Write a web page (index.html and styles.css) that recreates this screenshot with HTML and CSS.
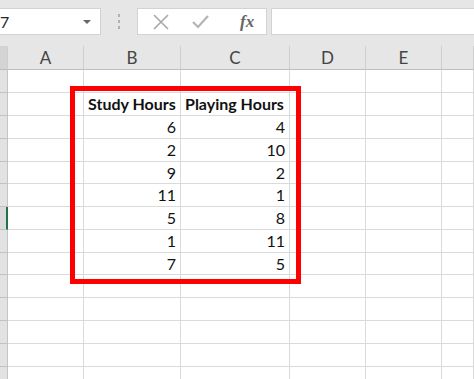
FILE: index.html
```html
<!DOCTYPE html>
<html lang="en">
<head>
  <meta charset="UTF-8">
  <meta name="viewport" content="width=device-width, initial-scale=1.0">
  <title>Study vs Playing Hours</title>
  <link rel="stylesheet" href="styles.css">
</head>
<body>
  <div class="toolbar">
    <div class="namebox"><span>7</span><span class="caret"></span></div>
    <div class="grip"><i></i><i></i><i></i></div>
    <div class="fx-buttons">
      <svg class="ico" width="18" height="18" viewBox="0 0 18 18"><path d="M2 2 L16 16 M16 2 L2 16" stroke="#a8a8a8" stroke-width="1.6" fill="none"/></svg>
      <svg class="ico" width="18" height="18" viewBox="0 0 18 18"><path d="M1 9 L6 14 L16 3" stroke="#b4b4b4" stroke-width="2.2" fill="none"/></svg>
      <span class="fx">fx</span>
    </div>
    <div class="formula"></div>
  </div>

  <div class="sheet">
    <div class="row head"><div class="rh corner"></div><div>A</div><div>B</div><div>C</div><div>D</div><div>E</div><div></div></div>
    <div class="row"><div class="rh"></div><div></div><div></div><div></div><div></div><div></div><div></div></div>
    <div class="row"><div class="rh"></div><div></div><div class="b">Study Hours</div><div class="b">Playing Hours</div><div></div><div></div><div></div></div>
    <div class="row"><div class="rh"></div><div></div><div class="n">6</div><div class="n">4</div><div></div><div></div><div></div></div>
    <div class="row"><div class="rh"></div><div></div><div class="n">2</div><div class="n">10</div><div></div><div></div><div></div></div>
    <div class="row short"><div class="rh"></div><div></div><div class="n">9</div><div class="n">2</div><div></div><div></div><div></div></div>
    <div class="row"><div class="rh"></div><div></div><div class="n">11</div><div class="n">1</div><div></div><div></div><div></div></div>
    <div class="row"><div class="rh active"></div><div></div><div class="n">5</div><div class="n">8</div><div></div><div></div><div></div></div>
    <div class="row"><div class="rh"></div><div></div><div class="n">1</div><div class="n">11</div><div></div><div></div><div></div></div>
    <div class="row short"><div class="rh"></div><div></div><div class="n">7</div><div class="n">5</div><div></div><div></div><div></div></div>
    <div class="row"><div class="rh"></div><div></div><div></div><div></div><div></div><div></div><div></div></div>
    <div class="row"><div class="rh"></div><div></div><div></div><div></div><div></div><div></div><div></div></div>
    <div class="row"><div class="rh"></div><div></div><div></div><div></div><div></div><div></div><div></div></div>
    <div class="row"><div class="rh"></div><div></div><div></div><div></div><div></div><div></div><div></div></div>
    <div class="row"><div class="rh"></div><div></div><div></div><div></div><div></div><div></div><div></div></div>

    <div class="highlight"></div>
  </div>
</body>
</html>
```

FILE: styles.css
```css
body { margin: 0; font-family: Lato, "Open Sans", sans-serif; background: #fff; overflow: hidden; }

.toolbar { height: 46px; background: #e6e6e6; display: flex; align-items: flex-start; padding-top: 8px; box-sizing: border-box; }
.namebox { width: 101px; height: 27px; background: #fff; border: 1px solid #d2d2d2; border-left: none; box-sizing: border-box; display: flex; align-items: center; justify-content: space-between; padding-right: 9px; font-size: 16px; color: #222; }
.caret { width: 0; height: 0; border-left: 4px solid transparent; border-right: 4px solid transparent; border-top: 4px solid #666; }
.grip { width: 36px; height: 27px; display: flex; flex-direction: column; align-items: center; justify-content: center; gap: 3px; }
.grip i { width: 2px; height: 3px; background: #b0b0b0; }
.fx-buttons { width: 130px; height: 27px; background: #fff; border: 1px solid #d2d2d2; box-sizing: border-box; display: flex; align-items: center; gap: 22px; padding-left: 14px; }
.fx { font-family: "Liberation Serif", serif; font-style: italic; font-weight: bold; font-size: 17px; color: #666; margin-left: 8px; }
.formula { flex: 1; height: 27px; margin-left: 4px; background: #fff; border: 1px solid #d2d2d2; border-right: none; box-sizing: border-box; }

.sheet { position: relative; overflow: hidden; }
.row { display: grid; grid-template-columns: 8px 76px 97px 109px 76px 76px minmax(0, 1fr); height: 23px; }
.row.short { height: 22px; }
.row > div { border-right: 1px solid #dadada; border-bottom: 1px solid #dadada; box-sizing: border-box; font-size: 16px; line-height: 22px; color: #111; padding: 0 4px; white-space: nowrap; overflow: hidden; }
.row.head { height: 24px; background: #e6e6e6; }
.row.head > div { border-right-color: #cfcfcf; border-bottom-color: #bdbdbd; text-align: center; color: #444; font-size: 17px; line-height: 23px; }
.row > .rh { background: #e2e2e2; border-right: 1px solid #c4c4c4; border-bottom-color: #c2c2c2; padding: 0; }
.row > .rh.corner { background: #d4d4d4; }
.row > .rh.active { border-right: 2px solid #217346; background: #d9d9d9; }
.b { font-weight: bold; }
.n { text-align: right; }

.highlight { position: absolute; left: 70px; top: 40px; width: 231px; height: 198px; border: 5px solid #ff0000; box-sizing: border-box; }
```
